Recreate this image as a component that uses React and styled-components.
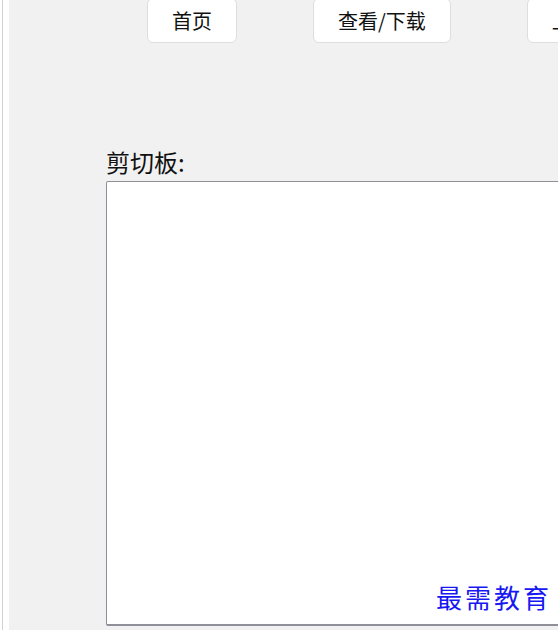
import React from 'react';
import styled, { createGlobalStyle } from 'styled-components';

const GlobalStyle = createGlobalStyle`
  html, body {
    margin: 0;
    padding: 0;
    background: #fff;
    overflow: hidden;
  }
  body {
    font-family: "Noto Sans CJK SC", "Liberation Sans", sans-serif;
  }
`;

const Frame = styled.div`
  position: relative;
  display: flex;
  height: 630px;
  width: 558px;
  overflow: hidden;
`;

const Gutter = styled.div`
  flex: 0 0 6px;
  margin-left: 2px;
  border-left: 1px solid #d2d2d2;
  background: #fff;
`;

const Main = styled.main`
  flex: 1;
  min-width: 0;
  background: #f1f1f1;
  overflow: hidden;
`;

const Nav = styled.nav`
  display: flex;
  gap: 76px;
  margin-top: -2px;
  padding-left: 138px;
  white-space: nowrap;
`;

const NavButton = styled.button`
  flex-shrink: 0;
  height: 45px;
  padding: 0 24px;
  background: #fff;
  border: 1px solid #dedede;
  border-radius: 6px;
  font-family: "Noto Sans CJK SC", sans-serif;
  font-size: 20px;
  color: #111;
`;

const Clipboard = styled.section`
  margin: 104px 0 0 97px;
`;

const Label = styled.label`
  display: block;
  height: 30px;
  margin-bottom: 4px;
  font-size: 24px;
  line-height: 30px;
  color: #111;
`;

const TextBox = styled.textarea`
  display: block;
  box-sizing: border-box;
  width: 520px;
  height: 445px;
  margin: 0;
  padding: 4px;
  background: #fff;
  border: 1px solid #8f8f99;
  border-bottom-width: 2px;
  border-radius: 2px;
  resize: none;
  outline: none;
`;

const Watermark = styled.div`
  position: absolute;
  right: 6px;
  bottom: 15px;
  font-family: "Noto Sans CJK SC", serif;
  font-size: 26px;
  letter-spacing: 3px;
  color: #1818f0;
  pointer-events: none;
`;

const navItems = ['首页', '查看/下载', '上传'];

export default function App() {
  return (
    <>
      <GlobalStyle />
      <Frame>
        <Gutter />
        <Main>
          <Nav>
            {navItems.map(item => (
              <NavButton key={item}>{item}</NavButton>
            ))}
          </Nav>
          <Clipboard>
            <Label htmlFor="clip">剪切板:</Label>
            <TextBox id="clip" />
          </Clipboard>
        </Main>
        <Watermark>最需教育</Watermark>
      </Frame>
    </>
  );
}
